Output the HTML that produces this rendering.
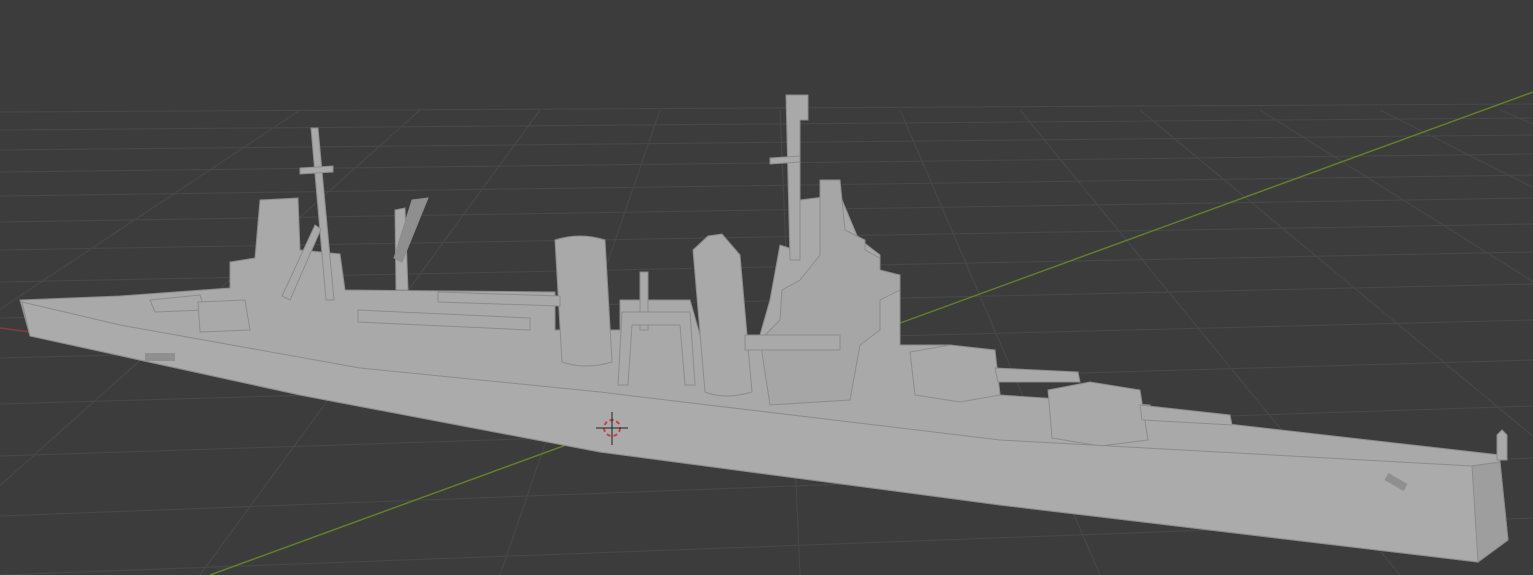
<!DOCTYPE html>
<html><head><style>html,body{margin:0;padding:0;background:#3d3d3d;overflow:hidden}svg{display:block}</style></head><body>
<svg width="1533" height="575" viewBox="0 0 1533 575" xmlns="http://www.w3.org/2000/svg">
<rect width="1533" height="575" fill="#3c3c3c"/>
<g stroke="#474747" stroke-width="1.2" fill="none">
<path d="M0,130 L1533,118 M0,150 L1533,135 M0,172 L1533,154 M0,196 L1533,175 M0,222 L1533,198 M0,250 L1533,224 M0,282 L1533,252 M0,318 L1533,284 M0,358 L1533,320 M0,404 L1533,360 M0,456 L1533,406 M0,516 L1533,458 M0,575 L1533,518 M0,112 L1533,104"/>
<path d="M-400,575 L300,110 M-100,575 L420,110 M200,575 L540,110 M500,575 L660,110 M800,575 L780,110 M1100,575 L900,110 M1400,575 L1020,110 M1700,575 L1140,110 M2000,575 L1260,110 M2300,575 L1380,110 M2600,575 L1500,110"/>
</g>
<line x1="210" y1="575" x2="1533" y2="92" stroke="#5f7f2a" stroke-width="1.5"/>
<line x1="0" y1="328" x2="30" y2="332" stroke="#8a3a3a" stroke-width="1.5"/>
<g fill="#a9a9a9" stroke="#8c8c8c" stroke-width="1">
<path d="M20,300 L120,296 L230,288 L230,262 L255,258 L260,200 L298,198 L300,250 L340,254 L345,290 L555,292 L555,330 L620,330 L620,300 L690,300 L700,335 L760,335 L770,300 L780,245 L795,250 L800,200 L840,195 L858,238 L880,255 L880,275 L900,280 L900,345 L950,345 L995,352 L1000,395 L1150,405 L1150,415 L1500,455 L1500,462 L1472,466 L1478,562 L1000,505 L600,452 L300,395 L30,336 Z"/>
<path d="M555,240 Q580,232 605,240 L612,362 Q585,370 562,362 Z"/>
<path d="M693,250 L708,236 L722,234 L740,255 L752,392 Q725,400 705,392 Z"/>
<path d="M640,272 L648,272 L648,330 L640,330 Z"/>
<path d="M622,312 L690,312 L695,385 L685,385 L680,325 L632,325 L628,385 L618,385 Z"/>
<path d="M311,128 L318,128 L334,300 L326,300 Z"/>
<path d="M300,168 L333,166 L333,172 L300,174 Z"/>
<path d="M282,296 L315,225 L321,229 L290,300 Z"/>
<path d="M786,95 L808,95 L808,120 L800,120 L800,260 L790,260 Z"/>
<path d="M770,158 L800,156 L800,162 L770,164 Z"/>
<path d="M395,210 L405,208 L408,290 L396,290 Z"/>
<path d="M412,200 L428,198 L402,262 L394,258 Z" fill="#8f8f8f"/>
<path d="M438,292 L560,296 L560,306 L438,302 Z"/>
<path d="M358,310 L530,318 L530,330 L358,322 Z"/>
<path d="M820,180 L840,180 L845,230 L865,240 L865,250 L880,258 L880,270 L900,275 L900,290 L880,300 L880,330 L860,345 L850,400 L770,405 L760,340 L780,320 L782,290 L800,280 L820,255 Z" fill="#a6a6a6"/>
<path d="M745,335 L840,335 L840,350 L745,350 Z"/>
<path d="M150,300 L200,295 L205,310 L155,312 Z"/>
<path d="M198,302 L245,300 L250,330 L200,332 Z"/>
<path d="M910,352 L950,345 L995,350 L1000,395 L960,402 L915,395 Z"/>
<path d="M995,368 L1078,372 L1080,382 L998,382 Z"/>
<path d="M1048,390 L1090,382 L1140,390 L1148,440 L1100,446 L1052,438 Z"/>
<path d="M1140,405 L1230,415 L1232,425 L1142,420 Z"/>
<path d="M1497,435 L1502,430 L1507,435 L1507,460 L1497,460 Z"/>
<path d="M22,302 L120,325 L360,368 L600,392 L1000,440 L1472,466 L1500,462 L1508,540 L1478,562 L1000,505 L600,452 L300,395 L30,336 Z" fill="#ababab"/>
<path d="M1472,466 L1500,462 L1508,540 L1478,562 Z" fill="#9e9e9e"/>
</g>
<g fill="#8f8f8f">
<rect x="145" y="353" width="30" height="8"/>
<rect x="1385" y="478" width="22" height="8" transform="rotate(30 1396 482)"/>
</g>
<circle cx="612" cy="428" r="8" fill="none" stroke="#c84040" stroke-width="2" stroke-dasharray="4 3"/>
<path d="M612,412 V445 M596,428 H628" stroke="#222" stroke-width="1"/>
</svg>
</body></html>
